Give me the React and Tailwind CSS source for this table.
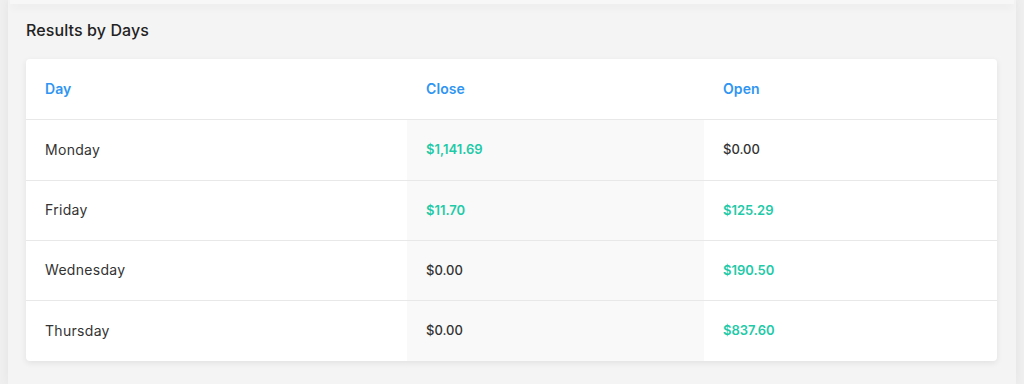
import React from "react";

const rows = [
  { day: "Monday", close: "$1,141.69", closeGreen: true, open: "$0.00", openGreen: false, h: "h-[61px]" },
  { day: "Friday", close: "$11.70", closeGreen: true, open: "$125.29", openGreen: true, h: "h-[60px]" },
  { day: "Wednesday", close: "$0.00", closeGreen: false, open: "$190.50", openGreen: true, h: "h-[60px]" },
  { day: "Thursday", close: "$0.00", closeGreen: false, open: "$837.60", openGreen: true, h: "h-[60px]" },
];

function Val({ v, green }) {
  return (
    <span className={green ? "text-[13px] text-[#1fcaa8] font-semibold" : "text-[13px] text-[#333333] font-medium"}>{v}</span>
  );
}

export default function App() {
  return (
    <div
      className="w-[1024px] h-[384px] overflow-hidden bg-[#efefef]"
      style={{ fontFamily: "Inter, 'Noto Sans', sans-serif" }}
    >
      <div className="mx-[8px] h-[384px] bg-[#f4f4f4] shadow-[0_0_10px_rgba(0,0,0,0.05)]">
        <div className="mx-[2px] h-[4px] bg-[#f7f7f7] shadow-[0_3px_8px_rgba(0,0,0,0.06)]" />
        <div className="pl-[18px] pr-[19px]">
          <div className="pt-[16px] h-[55px] text-[16px] font-medium text-[#222222] leading-[20px] tracking-[0.1px]">
            Results by Days
          </div>
          <div className="w-[971px] bg-white rounded-[4px] shadow-[0_2px_6px_rgba(0,0,0,0.08)] overflow-hidden">
            <div className="grid grid-cols-[381px_297px_293px] h-[61px] border-b border-[#e8e8e8] items-center pb-[2px] text-[14px] text-[#2f95f2] font-semibold tracking-[0.1px]">
              <div className="pl-[19px]">Day</div>
              <div className="pl-[19px]">Close</div>
              <div className="pl-[19px]">Open</div>
            </div>
            {rows.map((r, i) => (
              <div
                key={r.day}
                className={
                  "grid grid-cols-[381px_297px_293px] " +
                  r.h +
                  (i < rows.length - 1 ? " border-b border-[#e8e8e8]" : "")
                }
              >
                <div className="pl-[19px] pb-[2px] flex items-center text-[14px] text-[#333333] font-normal tracking-[0.3px]">{r.day}</div>
                <div className="pl-[19px] flex items-center bg-[#f9f9f9]">
                  <Val v={r.close} green={r.closeGreen} />
                </div>
                <div className="pl-[19px] flex items-center">
                  <Val v={r.open} green={r.openGreen} />
                </div>
              </div>
            ))}
          </div>
        </div>
      </div>
    </div>
  );
}
